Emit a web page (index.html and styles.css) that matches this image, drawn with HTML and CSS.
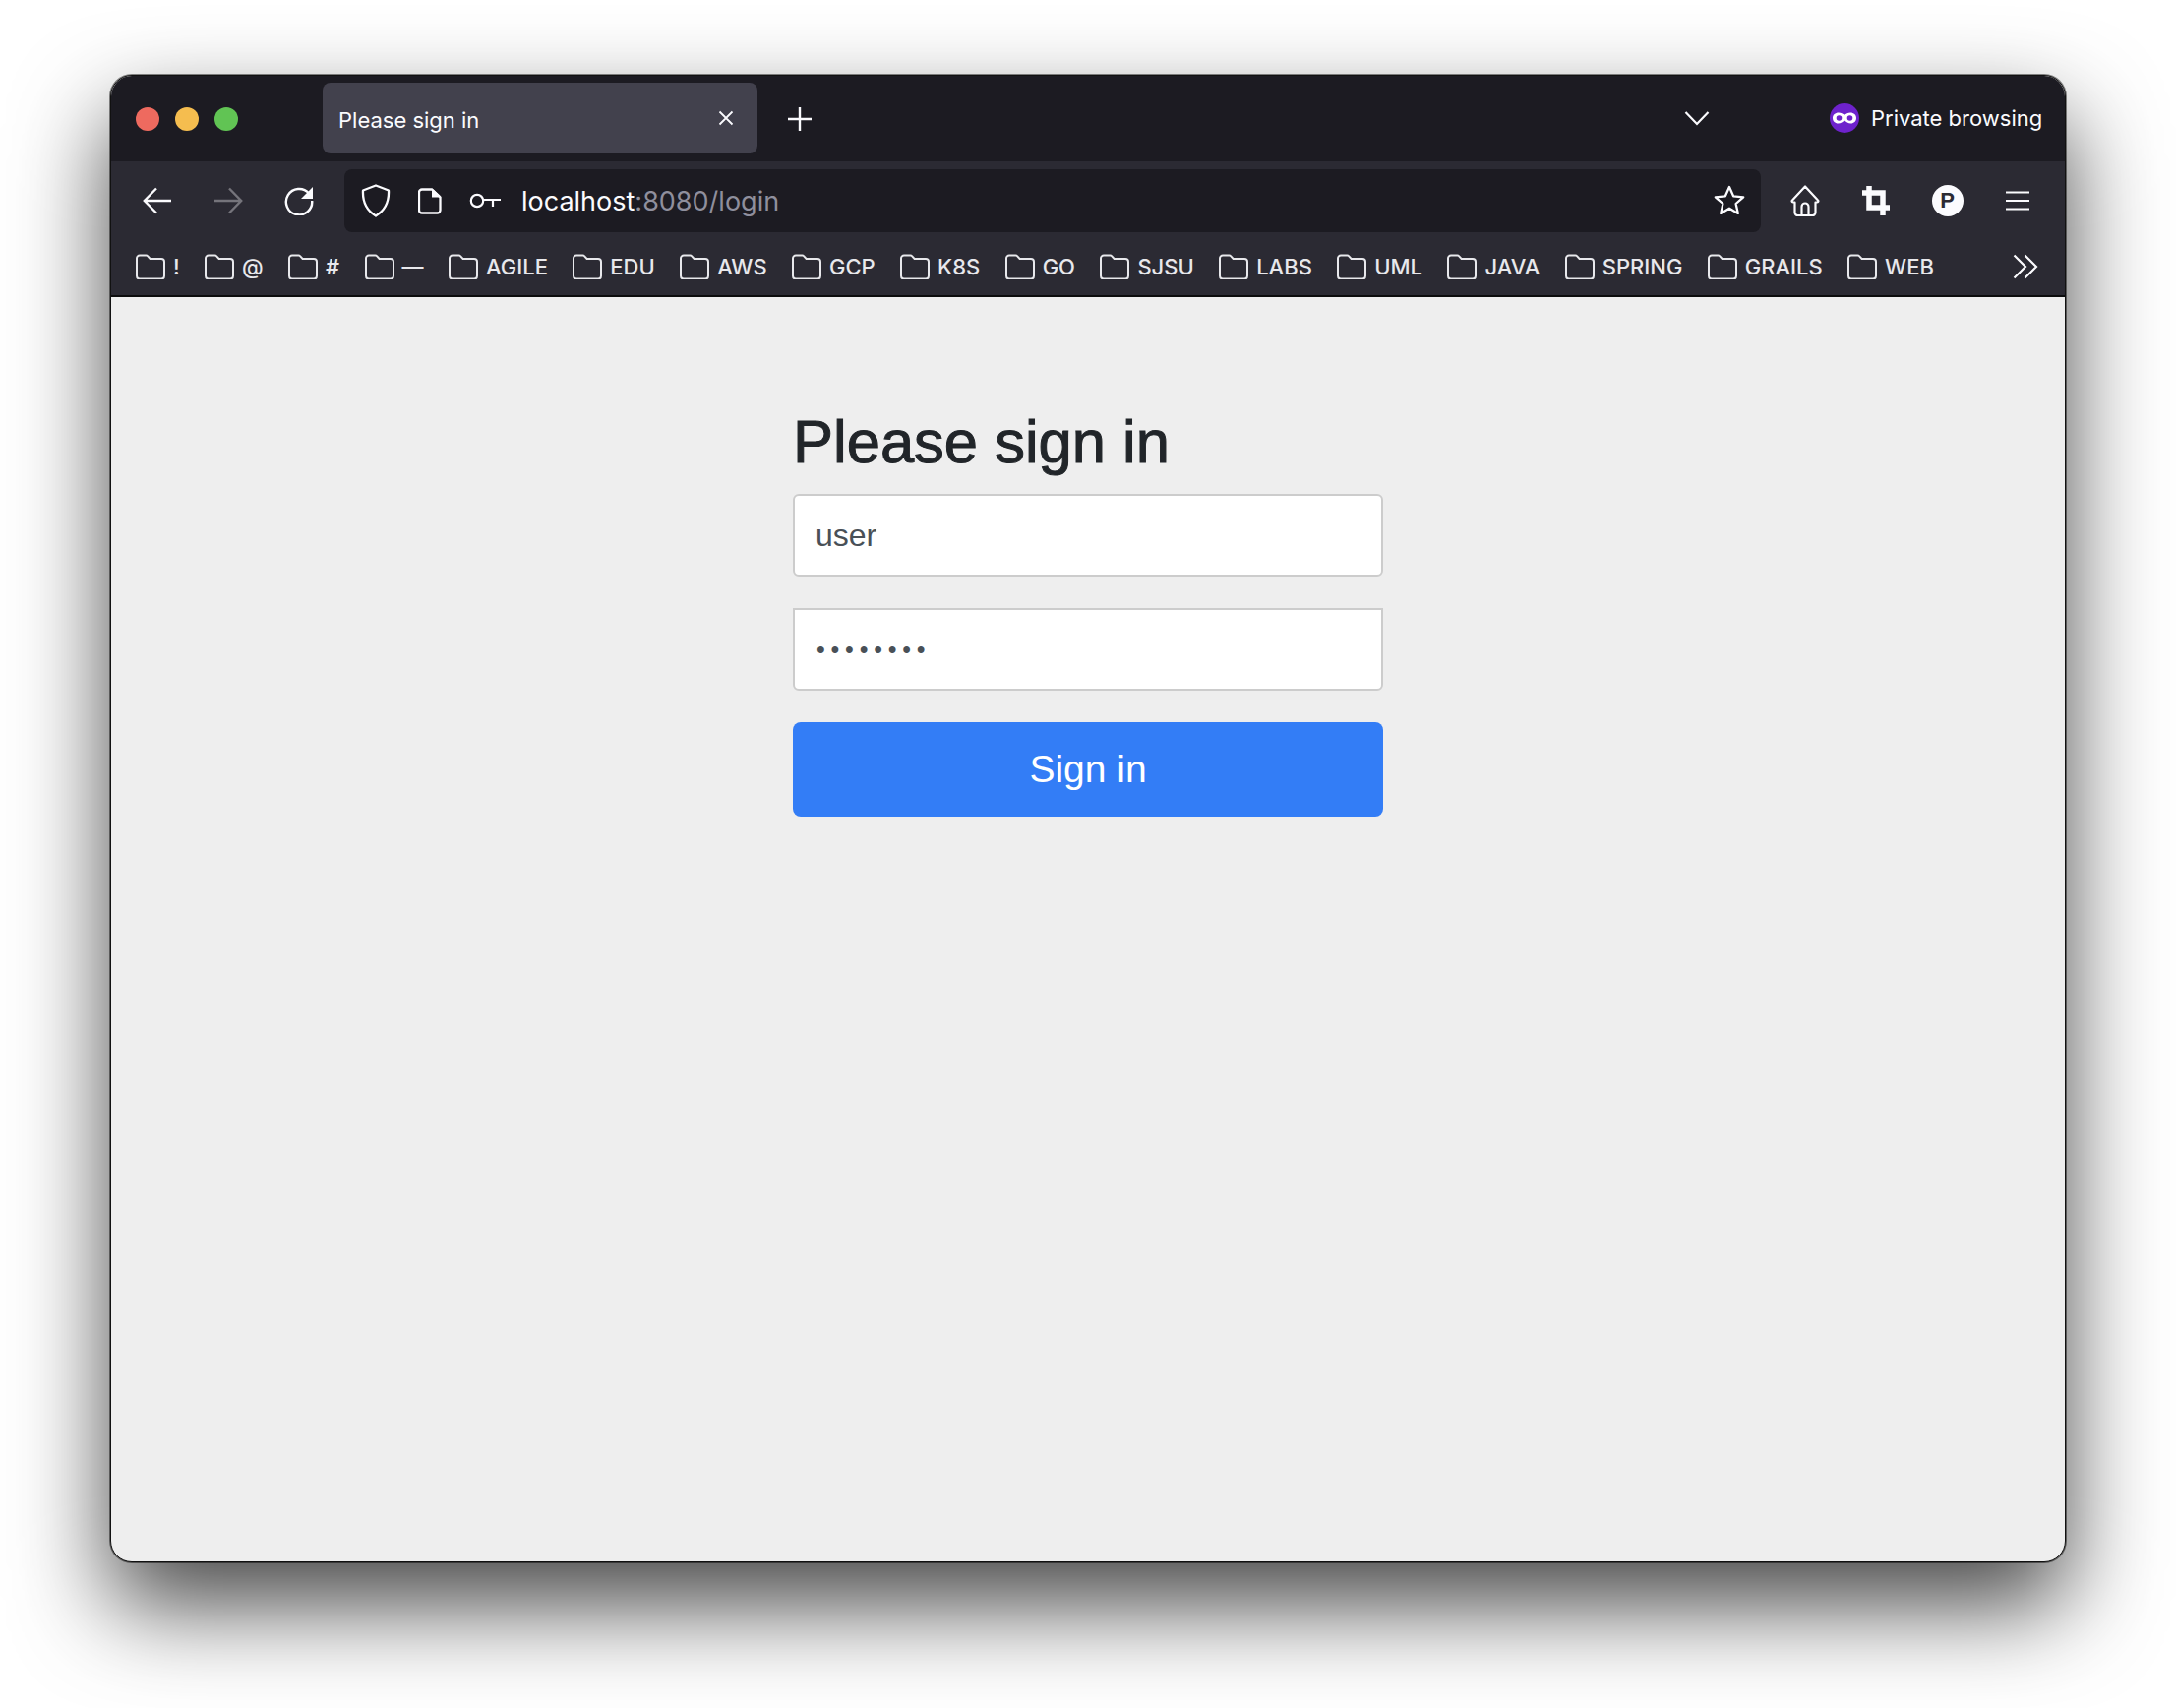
FILE: index.html
```html
<!DOCTYPE html>
<html lang="en">
<head>
  <meta charset="UTF-8">
  <title>Please sign in</title>
  <link rel="stylesheet" href="styles.css">
</head>
<body>
  <svg class="defs" width="0" height="0">
    <symbol id="folder" viewBox="0 0 30 26">
      <path d="M4 1.500h6.500a2 2 0 0 1 1.500.7l2.600 2.800h11.400a3 3 0 0 1 3 3v14.500a3 3 0 0 1-3 3H4a3 3 0 0 1-3-3V4.500a3 3 0 0 1 3-3z" fill="none" stroke="currentColor" stroke-width="2"/>
    </symbol>
  </svg>

  <div class="window">
    <div class="tabstrip">
      <div class="lights">
        <span class="light red"></span>
        <span class="light yellow"></span>
        <span class="light green"></span>
      </div>
      <div class="tab">
        <span class="tab-title">Please sign in</span>
        <svg class="tab-close" width="16" height="16" viewBox="0 0 16 16"><path d="M1.500 1.500l13 13M14.500 1.500l-13 13" stroke="currentColor" stroke-width="1.800"/></svg>
      </div>
      <svg class="new-tab" width="26" height="26" viewBox="0 0 26 26"><path d="M13 1v24M1 13h24" stroke="currentColor" stroke-width="2.400"/></svg>
      <svg class="tab-list" width="26" height="16" viewBox="0 0 26 16"><path d="M1.500 2L13 14 24.500 2" fill="none" stroke="currentColor" stroke-width="2.200"/></svg>
      <div class="private">
        <svg width="30" height="30" viewBox="0 0 30 30">
          <circle cx="15" cy="15" r="15" fill="#6e22cc"/>
          <path d="M9 9.500c2.500 0 4.300 1.300 6 2.300 1.700-1 3.500-2.300 6-2.300 3.500 0 6 2.300 6 5.500s-2.500 5.500-5.500 5.500c-2.800 0-4.800-1.700-6.500-3-1.700 1.300-3.700 3-6.500 3C5.500 20.500 3 18.200 3 15s2.500-5.500 6-5.500z" fill="#fff"/>
          <circle cx="9.500" cy="15" r="2.800" fill="#6e22cc"/>
          <circle cx="20.500" cy="15" r="2.800" fill="#6e22cc"/>
        </svg>
        <span>Private browsing</span>
      </div>
    </div>

    <div class="navbar">
      <button class="nav-btn">
        <svg width="30" height="28" viewBox="0 0 30 28"><path d="M29 14H2M14 1.500L1.800 14 14 26.500" fill="none" stroke="currentColor" stroke-width="2.400"/></svg>
      </button>
      <button class="nav-btn disabled">
        <svg width="30" height="28" viewBox="0 0 30 28"><path d="M1 14h27M16 1.500L28.200 14 16 26.500" fill="none" stroke="currentColor" stroke-width="2.400"/></svg>
      </button>
      <button class="nav-btn">
        <svg width="30" height="30" viewBox="0 0 30 30"><path d="M25 7.500A13.200 13.200 0 1 0 28.200 15" fill="none" stroke="currentColor" stroke-width="2.400"/><path d="M29 1v12H17z" fill="currentColor"/></svg>
      </button>
      <div class="urlbar">
        <svg class="url-shield" width="30" height="34" viewBox="0 0 30 34"><path d="M15 1.500l13 5c.6 12-3 20-13 26C5 26.500 1.400 18.500 2 6.500z" fill="none" stroke="currentColor" stroke-width="2.300" stroke-linejoin="round"/></svg>
        <svg class="url-doc" width="24" height="27" viewBox="0 0 24 27"><path d="M4 1.500h10l8.500 8v13a3 3 0 0 1-3 3H4a3 3 0 0 1-3-3v-18a3 3 0 0 1 3-3z" fill="none" stroke="currentColor" stroke-width="2.300"/><path d="M14 1.500h1.500l7 6.500v1.500H14z" fill="currentColor"/></svg>
        <svg class="url-key" width="32" height="16" viewBox="0 0 32 16"><circle cx="8" cy="8" r="6.200" fill="none" stroke="currentColor" stroke-width="2.200"/><path d="M14 7h18M24 7v7" fill="none" stroke="currentColor" stroke-width="2.200"/></svg>
        <span class="url-text">localhost<span class="url-dim">:8080/login</span></span>
        <svg class="url-star" width="32" height="32" viewBox="0 0 32 32"><path d="M16 2l4.100 9.300 10.100 1-7.600 6.700 2.200 9.900-8.800-5.200-8.800 5.200 2.200-9.900-7.600-6.700 10.100-1z" fill="none" stroke="currentColor" stroke-width="2.300" stroke-linejoin="round"/></svg>
      </div>
      <div class="nav-right">
        <button class="nav-btn">
          <svg width="30" height="32" viewBox="0 0 30 32"><path d="M15 1.500L2 15.500c-1 1 0 2 1 2h1.500v10.500a3 3 0 0 0 3 3h15a3 3 0 0 0 3-3V17.500H27c1 0 2-1 1-2z" fill="none" stroke="currentColor" stroke-width="2.200" stroke-linejoin="round"/><path d="M11.500 31v-9a3.500 3.500 0 0 1 7 0v9" fill="none" stroke="currentColor" stroke-width="2.200"/></svg>
        </button>
        <button class="nav-btn">
          <svg width="28" height="30" viewBox="0 0 28 30"><path d="M7 0v22h21M0 7h21v23" fill="none" stroke="currentColor" stroke-width="5.500"/></svg>
        </button>
        <button class="nav-btn"><span class="avatar">P</span></button>
        <button class="nav-btn">
          <svg width="26" height="22" viewBox="0 0 26 22"><path d="M1 2.500h24M1 11h24M1 19.500h24" stroke="currentColor" stroke-width="2.200"/></svg>
        </button>
      </div>
    </div>

    <div class="bookmarks">
      <span class="bm"><svg width="30" height="26"><use href="#folder"/></svg>!</span>
      <span class="bm"><svg width="30" height="26"><use href="#folder"/></svg>@</span>
      <span class="bm"><svg width="30" height="26"><use href="#folder"/></svg>#</span>
      <span class="bm"><svg width="30" height="26"><use href="#folder"/></svg>—</span>
      <span class="bm"><svg width="30" height="26"><use href="#folder"/></svg>AGILE</span>
      <span class="bm"><svg width="30" height="26"><use href="#folder"/></svg>EDU</span>
      <span class="bm"><svg width="30" height="26"><use href="#folder"/></svg>AWS</span>
      <span class="bm"><svg width="30" height="26"><use href="#folder"/></svg>GCP</span>
      <span class="bm"><svg width="30" height="26"><use href="#folder"/></svg>K8S</span>
      <span class="bm"><svg width="30" height="26"><use href="#folder"/></svg>GO</span>
      <span class="bm"><svg width="30" height="26"><use href="#folder"/></svg>SJSU</span>
      <span class="bm"><svg width="30" height="26"><use href="#folder"/></svg>LABS</span>
      <span class="bm"><svg width="30" height="26"><use href="#folder"/></svg>UML</span>
      <span class="bm"><svg width="30" height="26"><use href="#folder"/></svg>JAVA</span>
      <span class="bm"><svg width="30" height="26"><use href="#folder"/></svg>SPRING</span>
      <span class="bm"><svg width="30" height="26"><use href="#folder"/></svg>GRAILS</span>
      <span class="bm"><svg width="30" height="26"><use href="#folder"/></svg>WEB</span>
      <svg class="bm-more" width="26" height="26" viewBox="0 0 26 26"><path d="M1.500 1.500L13 13 1.500 24.500M12.500 1.500L24 13 12.500 24.500" fill="none" stroke="currentColor" stroke-width="2.200"/></svg>
    </div>

    <div class="page">
      <form class="signin" onsubmit="return false">
        <h2 class="signin-title">Please sign in</h2>
        <input class="field field-user" type="text" value="user">
        <input class="field field-pass" type="password" value="password">
        <button class="signin-btn" type="submit">Sign in</button>
      </form>
    </div>
  </div>
</body>
</html>
```

FILE: styles.css
```css
html, body {
  margin: 0;
  height: 100%;
}
body {
  background-color: #fff;
  padding: 76px 112px 148px;
  box-sizing: border-box;
  overflow: hidden;
  font-family: Inter, "Liberation Sans", sans-serif;
}
.defs {
  position: absolute;
}
.window {
  height: 1512px;
  box-sizing: border-box;
  border: 1px solid #111;
  border-radius: 22px;
  overflow: hidden;
  display: flex;
  flex-direction: column;
  background-color: #eee;
  box-shadow: 0 0 0 1px rgba(0, 0, 0, 0.45), 0 44px 96px rgba(0, 0, 0, 0.72);
  color: #fbfbfe;
}

/* tab strip */
.tabstrip {
  height: 87px;
  background-color: #1c1b22;
  display: flex;
  align-items: center;
  flex: none;
}
.lights {
  display: flex;
  gap: 16px;
  margin-left: 25px;
  width: 190px;
}
.light {
  width: 24px;
  height: 24px;
  border-radius: 50%;
}
.red { background-color: #ee6a5f; }
.yellow { background-color: #f5bd4f; }
.green { background-color: #61c454; }
.tab {
  width: 442px;
  height: 72px;
  margin-top: -1px;
  background-color: #42414d;
  border-radius: 8px;
  display: flex;
  align-items: center;
  justify-content: space-between;
  padding: 0 24px 0 16px;
  box-sizing: border-box;
  font-size: 22px;
}
.tab-title {
  padding-top: 3px;
}
.tab-close {
  margin-right: 0;
  margin-top: -1px;
}
.new-tab {
  margin-left: 30px;
}
.tab-list {
  margin-left: 886px;
  margin-top: -2px;
}
.private {
  display: flex;
  align-items: center;
  gap: 12px;
  margin-left: 122px;
  margin-top: -2px;
  font-size: 22px;
}

/* address row */
.navbar {
  height: 72px;
  box-sizing: border-box;
  padding: 8px 0 0 11px;
  background-color: #2b2a33;
  display: flex;
  align-items: center;
  flex: none;
}
.nav-btn {
  width: 72px;
  height: 64px;
  padding: 0;
  border: 0;
  background: none;
  color: inherit;
  display: flex;
  align-items: center;
  justify-content: center;
}
.nav-btn.disabled {
  color: #75747b;
}
.urlbar {
  width: 1440px;
  height: 64px;
  margin-left: 10px;
  background-color: #1c1b22;
  border-radius: 8px;
  display: flex;
  align-items: center;
  flex: none;
  box-sizing: border-box;
  padding-left: 17px;
}
.url-doc {
  margin-left: 28px;
}
.url-key {
  margin-left: 28px;
}
.url-text {
  margin-left: 21px;
  padding-top: 1px;
  font-size: 27px;
}
.url-dim {
  color: #8f8f9d;
}
.url-star {
  margin-left: auto;
  margin-right: 16px;
}
.nav-right {
  display: flex;
  margin-left: 9px;
}
.avatar {
  width: 32px;
  height: 32px;
  margin-left: 1px;
  border-radius: 50%;
  background-color: #fbfbfe;
  color: #2b2a33;
  font-size: 22px;
  font-weight: 800;
  line-height: 32px;
  text-align: center;
}

/* bookmarks */
.bookmarks {
  height: 58px;
  padding: 6px 0 0 25px;
  background-color: #2b2a33;
  border-bottom: 2px solid #0c0c0d;
  display: flex;
  align-items: center;
  flex: none;
  gap: 25.400px;
  font-size: 22px;
  font-weight: 500;
}
.bm {
  display: flex;
  align-items: center;
  gap: 8px;
  color: #e8e8ec;
}
.bm-more {
  margin-left: auto;
  margin-right: 27px;
}

/* sign in form */
.page {
  flex: 1;
  display: flex;
  justify-content: center;
  padding-top: 107px;
}
.signin {
  width: 600px;
  display: flex;
  flex-direction: column;
  font-family: "Liberation Sans", Arial, sans-serif;
}
.signin-title {
  margin: 0 0 13px;
  font-size: 61.500px;
  font-weight: 500;
  line-height: 80px;
  color: #212529;
  -webkit-text-stroke: 1px #212529;
}
.field {
  height: 84px;
  box-sizing: border-box;
  padding: 0 21px;
  border: 2px solid #ccc;
  background-color: #fff;
  font-family: inherit;
  font-size: 32px;
  color: #495057;
  outline: none;
}
.field-user {
  border-radius: 6px;
}
.field-pass {
  margin-top: 32px;
  padding-left: 22px;
  border-radius: 0 0 6px 6px;
  font-size: 25px;
  letter-spacing: 5.800px;
}
.signin-btn {
  height: 96px;
  margin-top: 32px;
  border: 0;
  border-radius: 8px;
  background-color: #337df6;
  color: #fff;
  font-family: inherit;
  font-size: 39px;
}
```
